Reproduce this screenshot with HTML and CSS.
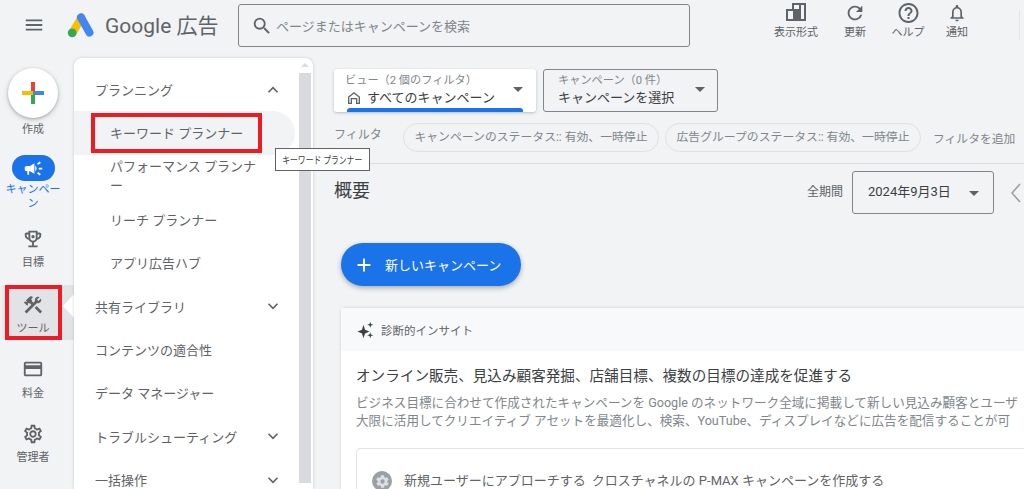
FILE: index.html
```html
<!DOCTYPE html>
<html lang="ja">
<head>
<meta charset="utf-8">
<title>Google 広告</title>
<link rel="stylesheet" href="styles.css">
</head>
<body>
<div class="app">
  <header class="topbar">
    <svg class="menu-icon" viewBox="0 0 24 24"><path d="M3 18h18v-2H3v2zm0-5h18v-2H3v2zm0-7v2h18V6H3z"/></svg>
    <svg class="logo" viewBox="0 0 28 26"><line x1="6" y1="20" x2="14.5" y2="5.5" stroke="#fbbc04" stroke-width="8" stroke-linecap="round"/><line x1="14" y1="5.5" x2="22.5" y2="20.5" stroke="#4285f4" stroke-width="8" stroke-linecap="round"/><circle cx="5.2" cy="20.8" r="4.4" fill="#34a853"/></svg>
    <div class="brand">Google 広告</div>
    <div class="search">
      <svg class="search-icon" viewBox="0 0 24 24"><path d="M15.5 14h-.79l-.28-.27A6.471 6.471 0 0 0 16 9.5 6.5 6.5 0 1 0 9.5 16c1.61 0 3.09-.59 4.23-1.57l.27.28v.79l5 4.99L20.49 19l-4.99-5zm-6 0C7.01 14 5 11.99 5 9.5S7.01 5 9.5 5 14 7.01 14 9.5 11.99 14 9.5 14z"/></svg>
      <span>ページまたはキャンペーンを検索</span>
    </div>
    <div class="actions">
      <div class="action a-view">
        <svg viewBox="0 0 20 18"><path fill-rule="evenodd" d="M6 0h14v18H0V6h6V0zM2 8v8h5V8H2zm13-6v14h3V2h-3zM8 2v4h5V2H8z"/></svg>
        <span>表示形式</span>
      </div>
      <div class="action a-refresh">
        <svg viewBox="0 0 24 24"><path d="M17.65 6.35A7.958 7.958 0 0 0 12 4c-4.42 0-7.99 3.58-7.99 8s3.57 8 7.99 8c3.73 0 6.84-2.55 7.730-6h-2.080A5.990 5.990 0 0 1 12 18c-3.310 0-6-2.690-6-6s2.690-6 6-6c1.660 0 3.140.69 4.220 1.780L13 11h7V4l-2.350 2.350z"/></svg>
        <span>更新</span>
      </div>
      <div class="action a-help">
        <svg viewBox="0 0 24 24"><path d="M11 18h2v-2h-2v2zm1-16C6.48 2 2 6.48 2 12s4.48 10 10 10 10-4.48 10-10S17.52 2 12 2zm0 18c-4.41 0-8-3.59-8-8s3.59-8 8-8 8 3.59 8 8-3.59 8-8 8zm0-14c-2.21 0-4 1.79-4 4h2c0-1.1.9-2 2-2s2 .9 2 2c0 2-3 1.75-3 5h2c0-2.25 3-2.5 3-5 0-2.21-1.79-4-4-4z"/></svg>
        <span>ヘルプ</span>
      </div>
      <div class="action a-bell">
        <svg viewBox="0 0 24 24"><path d="M12 22c1.1 0 2-.9 2-2h-4c0 1.1.9 2 2 2zm6-6v-5c0-3.07-1.64-5.64-4.5-6.32V4c0-.83-.67-1.5-1.5-1.5s-1.5.67-1.5 1.5v.68C7.63 5.36 6 7.92 6 11v5l-2 2v1h16v-1l-2-2zm-2 1H8v-6c0-2.48 1.51-4.5 4-4.500s4 2.020 4 4.500v6z"/></svg>
        <span>通知</span>
      </div>
      <div class="action-sep"></div>
    </div>
  </header>

  <aside class="rail">
    <div class="create">
      <div class="create-btn">
        <svg viewBox="0 0 24 24"><rect x="10" y="1" width="4" height="11" fill="#ea4335"/><rect x="12" y="10" width="11" height="4" fill="#4285f4"/><rect x="10" y="12" width="4" height="11" fill="#34a853"/><rect x="1" y="10" width="11" height="4" fill="#fbbc04"/></svg>
      </div>
      <span>作成</span>
    </div>
    <div class="rail-item campaign">
      <div class="pill"><svg viewBox="0 0 24 24"><path d="M18 11v2h4v-2h-4zm-2 6.61c.96.71 2.21 1.65 3.2 2.39.4-.53.8-1.07 1.2-1.6-.99-.74-2.24-1.68-3.2-2.4-.4.54-.8 1.08-1.2 1.61zM20.4 5.6c-.4-.53-.8-1.07-1.2-1.6-.99.74-2.24 1.68-3.2 2.4.4.53.8 1.07 1.2 1.6.96-.72 2.21-1.65 3.2-2.4zM4 9c-1.1 0-2 .9-2 2v2c0 1.1.9 2 2 2h1v4h2v-4h1l5 3V6L8 9H4zm11.5 3c0-1.33-.58-2.53-1.5-3.35v6.69c.92-.81 1.5-2.01 1.5-3.34z"/></svg></div>
      <span>キャンペーン</span>
    </div>
    <div class="rail-item goal">
      <svg viewBox="0 0 24 24"><path fill-rule="evenodd" d="M19 5h-2V3H7v2H5c-1.1 0-2 .9-2 2v1c0 2.55 1.92 4.63 4.39 4.94.63 1.5 1.98 2.63 3.61 2.96V19H7v2h10v-2h-4v-3.1c1.63-.33 2.98-1.46 3.61-2.96C19.08 12.63 21 10.55 21 8V7c0-1.1-.9-2-2-2zM5 8V7h2v3.82C5.84 10.4 5 9.3 5 8zm10 3c0 1.65-1.35 3-3 3s-3-1.35-3-3V5h6v6zm4-3c0 1.3-.84 2.4-2 2.82V7h2v1z"/><circle cx="12" cy="9.5" r="1.8"/></svg>
      <span>目標</span>
    </div>
    <div class="rail-item tools">
      <svg viewBox="0 0 24 24"><path d="M13.78 15.3l6 6 2.11-2.16-6-6zM17.5 10c1.93 0 3.5-1.57 3.5-3.5 0-.58-.16-1.12-.41-1.6l-2.7 2.7-1.49-1.49 2.7-2.7c-.48-.25-1.02-.41-1.6-.41C15.57 3 14 4.57 14 6.5c0 .41.08.8.21 1.16l-1.85 1.85-1.78-1.78.71-.71-1.41-1.41L12 3.49a3 3 0 0 0-4.24 0L4.22 7.03l1.41 1.41H2.81l-.71.71 3.54 3.54.71-.71V9.15l1.41 1.41.71-.71 1.78 1.78-7.41 7.41 2.12 2.12L16.34 9.79c.36.13.75.21 1.16.21z"/></svg>
      <span>ツール</span>
      <i class="notch"></i>
      <i class="red-box"></i>
    </div>
    <div class="rail-item billing">
      <svg viewBox="0 0 24 24"><path d="M20 4H4c-1.11 0-1.99.89-1.99 2L2 18c0 1.11.89 2 2 2h16c1.11 0 2-.89 2-2V6c0-1.11-.89-2-2-2zm0 14H4v-6h16v6zm0-10H4V6h16v2z"/></svg>
      <span>料金</span>
    </div>
    <div class="rail-item admin">
      <svg viewBox="0 0 24 24"><path d="M19.43 12.98c.04-.32.07-.64.07-.98 0-.34-.03-.66-.07-.98l2.11-1.65c.19-.15.24-.42.12-.64l-2-3.46a.5.5 0 0 0-.61-.22l-2.49 1c-.52-.4-1.08-.73-1.69-.98l-.38-2.65A.488.488 0 0 0 14 2h-4c-.25 0-.46.18-.49.42l-.38 2.65c-.61.25-1.17.59-1.69.98l-2.49-1a.566.566 0 0 0-.18-.03c-.17 0-.34.09-.43.25l-2 3.46c-.13.22-.07.49.12.64l2.11 1.65c-.04.32-.07.65-.07.98 0 .33.03.66.07.98l-2.11 1.65c-.19.15-.24.42-.12.64l2 3.46a.5.5 0 0 0 .61.22l2.49-1c.52.4 1.08.73 1.69.98l.38 2.65c.03.24.24.42.49.42h4c.25 0 .46-.18.49-.42l.38-2.65c.61-.25 1.17-.59 1.69-.98l2.49 1c.06.02.12.03.18.03.17 0 .34-.09.43-.25l2-3.46c.12-.22.07-.49-.12-.64l-2.11-1.65zm-1.98-1.71c.04.31.05.52.05.73 0 .21-.02.43-.05.73l-.14 1.13.89.7 1.08.84-.7 1.21-1.27-.51-1.04-.42-.9.68c-.43.32-.84.56-1.25.73l-1.06.43-.16 1.13-.2 1.35h-1.4l-.19-1.35-.16-1.13-1.06-.43c-.43-.18-.83-.41-1.23-.71l-.91-.7-1.06.43-1.27.51-.7-1.21 1.08-.84.89-.7-.14-1.13c-.03-.31-.05-.54-.05-.74s.02-.43.05-.73l.14-1.13-.89-.7-1.08-.84.7-1.21 1.27.51 1.04.42.9-.68c.43-.32.84-.56 1.25-.73l1.06-.43.16-1.13.2-1.35h1.39l.19 1.35.16 1.13 1.06.43c.43.18.83.41 1.23.71l.91.7 1.06-.43 1.27-.51.7 1.21-1.07.85-.89.7.14 1.13zM12 8c-2.21 0-4 1.79-4 4s1.79 4 4 4 4-1.79 4-4-1.79-4-4-4zm0 6c-1.1 0-2-.9-2-2s.9-2 2-2 2 .9 2 2-.9 2-2 2z"/></svg>
      <span>管理者</span>
    </div>
  </aside>

  <nav class="panel">
    <div class="nav-list">
      <div class="nav-row head">プランニング<svg class="chev" viewBox="0 0 24 24"><path d="M6 15l6-6 6 6"/></svg></div>
      <div class="nav-row sub active">キーワード プランナー<i class="red-box"></i></div>
      <div class="nav-row sub wrap">パフォーマンス プランナー</div>
      <div class="nav-row sub">リーチ プランナー</div>
      <div class="nav-row sub">アプリ広告ハブ</div>
      <div class="nav-row">共有ライブラリ<svg class="chev" viewBox="0 0 24 24"><path d="M6 9l6 6 6-6"/></svg></div>
      <div class="nav-row">コンテンツの適合性</div>
      <div class="nav-row">データ マネージャー</div>
      <div class="nav-row">トラブルシューティング<svg class="chev" viewBox="0 0 24 24"><path d="M6 9l6 6 6-6"/></svg></div>
      <div class="nav-row">一括操作<svg class="chev" viewBox="0 0 24 24"><path d="M6 9l6 6 6-6"/></svg></div>
    </div>
    <div class="scrollbar"><i class="scroll-up"></i><div class="scroll-thumb"></div></div>
    <div class="tooltip"><span>キーワード プランナー</span></div>
  </nav>

  <main class="content">
    <div class="selectors">
      <div class="selector view">
        <div class="sel-text">
          <small>ビュー（2 個のフィルタ）</small>
          <div class="sel-value"><svg viewBox="0 0 24 24"><path d="M12 3L3 10v11h6v-7h6v7h6V10l-9-7zm7 16h-2v-7H7v7H5v-8l7-5.500 7 5.500v8z"/></svg>すべてのキャンペーン</div>
        </div>
        <i class="caret"></i>
        <i class="blue-bar"></i>
      </div>
      <div class="selector camp">
        <div class="sel-text">
          <small>キャンペーン（0 件）</small>
          <div class="sel-value">キャンペーンを選択</div>
        </div>
        <i class="caret"></i>
      </div>
    </div>
    <div class="filters">
      <span class="filter-label">フィルタ</span>
      <span class="chip">キャンペーンのステータス:: 有効、一時停止</span>
      <span class="chip">広告グループのステータス:: 有効、一時停止</span>
      <span class="filter-add">フィルタを追加</span>
    </div>
    <div class="overview">
      <h1>概要</h1>
      <div class="period">
        <span class="period-label">全期間</span>
        <div class="date-box">2024年9月3日<i class="caret"></i></div>
        <svg class="prev" viewBox="0 0 10 20"><path d="M9 1L1 10l8 9"/></svg>
      </div>
    </div>
    <div class="new-btn">
      <svg viewBox="0 0 24 24"><path d="M19 13h-6v6h-2v-6H5v-2h6V5h2v6h6v2z"/></svg>
      <span>新しいキャンペーン</span>
    </div>
    <section class="card">
      <div class="card-head">
        <svg viewBox="0 0 24 24"><path d="M10 5l2 6.500L18 14l-6 2.500L10 23l-2-6.500L2 14l6-2.500z"/><path d="M19 1l1 3 3 1-3 1-1 3-1-3-3-1 3-1z"/><path d="M19 15l1 3 3 1-3 1-1 3-1-3-3-1 3-1z"/></svg>
        <span>診断的インサイト</span>
      </div>
      <div class="card-body">
        <h2>オンライン販売、見込み顧客発掘、店舗目標、複数の目標の達成を促進する</h2>
        <p>ビジネス目標に合わせて作成されたキャンペーンを Google のネットワーク全域に掲載して新しい見込み顧客とユーザ</p>
        <p>大限に活用してクリエイティブ アセットを最適化し、検索、YouTube、ディスプレイなどに広告を配信することが可</p>
        <div class="inner">
          <div class="gear-dot"><svg viewBox="0 0 24 24"><path d="M19.400 13c.100-.3.100-.6.100-1s0-.7-.1-1l2.100-1.600c.2-.2.200-.4.100-.6l-2-3.500c-.1-.2-.4-.3-.6-.2l-2.500 1c-.5-.4-1.100-.7-1.700-1l-.4-2.600c0-.3-.2-.5-.5-.5h-4c-.3 0-.5.200-.5.400l-.4 2.700c-.6.200-1.200.6-1.700 1l-2.500-1c-.2-.1-.5 0-.6.200l-2 3.500c-.1.200-.1.400.1.600L4.600 11c-.1.300-.1.600-.1 1s0 .7.100 1l-2.100 1.600c-.2.200-.2.400-.1.600l2 3.500c.1.200.4.300.6.200l2.500-1c.5.400 1.100.700 1.700 1l.4 2.600c0 .3.200.500.500.500h4c.3 0 .5-.2.500-.4l.4-2.700c.6-.2 1.200-.6 1.700-1l2.500 1c.2.100.5 0 .6-.2l2-3.500c.1-.2.100-.4-.1-.6zM12 15.500a3.500 3.500 0 1 1 0-7 3.500 3.500 0 0 1 0 7z"/></svg></div>
          <span>新規ユーザーにアプローチする</span>
          <span class="inner-b">クロスチャネルの P-MAX キャンペーンを作成する</span>
        </div>
      </div>
    </section>
  </main>
</div>
</body>
</html>
```
FILE: styles.css
```css
* { box-sizing: border-box; }
html, body { margin: 0; height: 489px; overflow: hidden; }
body {
  background: #f1f3f4;
  color: #5f6368;
  font-family: Roboto, "Noto Sans CJK JP", "Liberation Sans", sans-serif;
  font-size: 13px;
}
i { display: block; }
svg { display: block; fill: currentColor; }

.app {
  display: grid;
  grid-template-columns: 74px 239px 711px;
  grid-template-rows: 58px 431px;
  height: 489px;
  overflow: hidden;
}

/* top bar */
.topbar {
  grid-column: 1 / 4;
  display: flex;
  align-items: flex-start;
  color: #5f6368;
}
.menu-icon { width: 22px; height: 22px; margin: 14px 0 0 23px; color: #5f6368; }
.logo { width: 28px; height: 26px; margin: 12px 0 0 22px; }
.brand {
  margin: 8px 0 0 10px;
  width: 133px;
  font-size: 21px;
  line-height: 36px;
  color: #5f6368;
  white-space: nowrap;
}
.search {
  width: 452px;
  height: 43px;
  margin-top: 4px;
  border: 1px solid #80868b;
  border-radius: 3px;
  display: flex;
  align-items: center;
  padding-left: 12px;
  font-size: 13px;
  color: #80868b;
}
.search-icon { width: 22px; height: 22px; margin-right: 3px; color: #5f6368; }
.actions { display: flex; position: relative; flex: 1; }
.action {
  position: absolute;
  top: 0;
  display: grid;
  grid-template-rows: 26px 14px;
  justify-items: center;
  align-items: center;
  font-size: 11px;
  line-height: 14px;
  white-space: nowrap;
  transform: translateX(-50%);
}
.action svg { color: #5f6368; }
.a-view { left: 106px; }
.a-view svg { width: 20px; height: 18px; margin-top: -2px; }
.a-refresh { left: 165px; }
.a-refresh svg { width: 22px; height: 22px; }
.a-help { left: 218px; }
.a-help svg { width: 24px; height: 24px; }
.a-bell { left: 267px; }
.a-bell svg { width: 20px; height: 20px; }
.action-sep { position: absolute; left: 329px; top: 10px; width: 1px; height: 30px; background: #e3e5e8; }

/* left rail */
.rail { display: flex; flex-direction: column; align-items: stretch; font-size: 11px; line-height: 14px; text-align: center; }
.create { display: flex; flex-direction: column; align-items: center; margin-top: 10px; height: 87px; }
.create-btn {
  width: 50px; height: 50px; border-radius: 50%; background: #fff;
  box-shadow: 0 1px 3px rgba(60,64,67,.35), 0 2px 6px rgba(60,64,67,.15);
  display: flex; align-items: center; justify-content: center;
  margin-left: -8px; margin-bottom: 5px;
}
.create-btn svg { width: 24px; height: 24px; }
.create span { margin-left: -8px; }
.rail-item { display: flex; flex-direction: column; align-items: center; position: relative; width: 66px; }
.rail-item svg { width: 22px; height: 22px; color: #5f6368; }
.campaign { color: #1a73e8; height: 72px; padding: 0 2px; }
.campaign span { width: 62px; word-break: break-all; margin-top: 2px; }
.pill { width: 43px; height: 26px; border-radius: 13px; background: #1a73e8; display: flex; align-items: center; justify-content: center; }
.pill svg { width: 21px; height: 21px; color: #fff; }
.goal { height: 58px; padding-top: 1px; }
.goal span { margin-top: 6px; }
.rail .tools {
  width: 74px; height: 55px; padding: 9px 8px 0 0;
  background: linear-gradient(90deg, #f1f3f4 0, #e2e3e6 6px);
}
.tools span { margin-top: 6px; }
.notch {
  position: absolute; right: 0; top: 9px; width: 0; height: 0;
  border-style: solid; border-width: 12px 11px 12px 0;
  border-color: transparent #fff transparent transparent;
}
.tools .red-box { left: 5px; top: 0; width: 57px; height: 55px; }
.red-box { position: absolute; border: 4px solid #ed1c24; }
.billing { height: 83px; padding-top: 18px; }
.billing span { margin-top: 7px; }
.admin { height: 65px; }
.admin span { margin-top: 6px; }

/* tools panel */
.panel {
  position: relative;
  background: #fff;
  border-radius: 8px 8px 0 0;
  box-shadow: 0 0 3px rgba(60,64,67,.25);
  display: flex;
  overflow: visible;
}
.nav-list { width: 225px; padding-top: 10px; flex: none; height: 431px; overflow: hidden; }
.nav-row {
  position: relative;
  height: 43.3px;
  display: flex;
  align-items: center;
  padding-left: 21px;
  font-size: 13px;
  color: #5f6368;
  white-space: nowrap;
}
.nav-row.sub { padding-left: 36px; }
.nav-row.active { background: #f1f3f4; border-radius: 0 22px 22px 0; width: 221px; }
.nav-row.active .red-box { left: 17px; top: 2px; width: 171px; height: 40px; }
.nav-row.wrap { white-space: normal; line-break: anywhere; padding-right: 36px; line-height: 19px; }
.chev { position: absolute; right: 17px; top: 13px; width: 18px; height: 18px; fill: none; stroke: #5f6368; stroke-width: 2.2; }
.scrollbar { width: 12px; height: 431px; position: relative; padding-top: 15px; flex: none; }
.scroll-up {
  position: absolute; top: 5px; left: 2px; width: 0; height: 0;
  border-style: solid; border-width: 0 4px 4px 4px;
  border-color: transparent transparent #dadce0 transparent;
}
.scroll-thumb { height: 410px; background: #d9dadd; }
.tooltip {
  position: absolute; left: 201px; top: 90px; z-index: 3;
  width: 95px; height: 23px;
  display: flex; align-items: center; justify-content: center;
  background: #fff; border: 1px solid #5f6368;
  font-size: 10px; color: #3c4043; white-space: nowrap;
}
.tooltip span { display: block; flex: none; transform: scaleX(.78); }

/* content */
.content { padding: 11px 0 0 21px; overflow: hidden; min-width: 0; }
.selectors { display: flex; gap: 7px; }
.selector { position: relative; height: 43px; border-radius: 3px; display: flex; padding: 5px 0 0 11px; white-space: nowrap; }
.selector small { display: block; font-size: 11.2px; line-height: 14px; color: #80868b; }
.sel-value { display: flex; align-items: center; font-size: 13px; line-height: 19px; color: #3c4043; }
.sel-value svg { width: 16px; height: 16px; margin: 0 5px 0 1px; color: #5f6368; }
.view { width: 202px; background: #fff; box-shadow: 0 1px 3px rgba(60,64,67,.3); overflow: hidden; }
.camp { width: 175px; border: 1px solid #80868b; padding-top: 4px; padding-left: 14px; }
.caret {
  position: absolute; top: 18px; right: 13px; width: 0; height: 0;
  border-style: solid; border-width: 5px 5px 0 5px;
  border-color: #5f6368 transparent transparent transparent;
}
.camp .caret { top: 17px; right: 12px; }
.blue-bar { position: absolute; left: 13px; bottom: -2px; width: 176px; height: 6px; border-radius: 3px 3px 0 0; background: #1a73e8; }
.filters { display: flex; align-items: center; margin-top: 11px; height: 29px; white-space: nowrap; }
.filter-label { width: 69px; color: #80868b; font-size: 12px; margin-top: -9px; }
.chip {
  width: 256px; height: 29px; margin-right: 6px;
  border: 1px solid #dfe1e5; border-radius: 15px;
  font-size: 11.85px; line-height: 27px; text-align: center; color: #80868b;
}
.filter-add { margin-left: 6px; color: #80868b; font-size: 11.8px; }
.overview {
  display: flex; align-items: flex-start; justify-content: space-between;
  border-top: 1px solid #dadce0; margin-top: 11px; padding: 7px 3px 0 0; height: 80px;
}
.overview h1 { margin: 7px 0 0; font-size: 18px; line-height: 26px; font-weight: 400; color: #3c4043; }
.period { display: flex; align-items: flex-start; }
.period-label { font-size: 12px; line-height: 42px; margin-right: 9px; color: #5f6368; }
.date-box {
  position: relative; width: 142px; height: 43px; border: 1px solid #80868b; border-radius: 3px;
  padding-left: 15px; font-size: 13px; line-height: 40px; color: #3c4043;
}
.date-box .caret { top: 19px; right: 14px; }
.prev { width: 10px; height: 20px; margin: 12px 0 0 17px; fill: none; stroke: #9aa0a6; stroke-width: 1.6; }
.new-btn {
  display: flex; align-items: center;
  width: 180px; height: 43px; margin: 0 0 22px 7px;
  background: #1a73e8; color: #fff; border-radius: 22px;
  box-shadow: 0 2px 5px rgba(60,64,67,.4);
  padding-left: 12px; font-size: 13px;
}
.new-btn svg { width: 22px; height: 22px; margin-right: 10px; }
.card {
  margin-left: 7px; width: 720px; background: #fff; border-radius: 4px 0 0 0;
  box-shadow: 0 0 3px rgba(60,64,67,.22);
}
.card-head { display: flex; align-items: center; height: 43px; padding-left: 15px; background: #f8f9fa; font-size: 11.5px; color: #5f6368; }
.card-head svg { width: 18px; height: 18px; margin-right: 7px; color: #3c4043; }
.card-body { padding: 15px 0 0 15px; }
.card-body h2 { margin: 0 0 8px; font-size: 14.6px; line-height: 20px; font-weight: 400; color: #3c4043; white-space: nowrap; }
.card-body p { margin: 0; font-size: 12.6px; line-height: 18px; color: #80868b; white-space: nowrap; }
.inner {
  display: flex; margin-top: 18px; width: 700px; height: 60px;
  border: 1px solid #e0e2e5; border-radius: 4px; padding: 22px 0 0 15px; font-size: 13px; line-height: 19px; color: #5f6368; white-space: nowrap;
}
.inner-b { margin-left: 6px; }
.gear-dot { width: 20px; height: 20px; border-radius: 50%; background: #9aa0a6; margin-right: 12px; display: flex; align-items: center; justify-content: center; }
.gear-dot svg { width: 15px; height: 15px; color: #dde0e3; }
```
